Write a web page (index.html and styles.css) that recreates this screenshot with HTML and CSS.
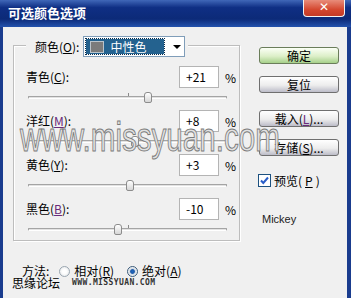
FILE: index.html
```html
<!DOCTYPE html>
<html lang="zh-CN">
    <head>
        <meta charset="UTF-8" />
        <title>可选颜色选项</title>
        <link rel="stylesheet" href="styles.css">
    </head>
    <body>
        <div class="window">
            <div class="titlebar">
                <span class="title">可选颜色选项</span>
                <span class="close">✕</span>
            </div>
            <div class="frame">
                <div class="left">
                    <div class="group">
                        <div class="group-head">
                            <span class="label">颜色(<u>O</u>):</span>
                            <div class="select">
                                <span class="picked"><i class="swatch"></i>中性色</span>
                                <span class="arrow"></span>
                            </div>
                        </div>
                        <div class="channel">
                            <div class="row"><span class="label">青色(<u>C</u>):</span><span class="field">+21</span><span class="pct">%</span></div>
                            <div class="slider"><div class="track"><i class="tick"></i><i class="thumb" style="left: 60.5%"></i></div></div>
                        </div>
                        <div class="channel">
                            <div class="row"><span class="label">洋红(<u class="hot">M</u>):</span><span class="field">+8</span><span class="pct">%</span></div>
                            <div class="slider"><div class="track"><i class="tick"></i><i class="thumb" style="left: 54%"></i></div></div>
                        </div>
                        <div class="channel">
                            <div class="row"><span class="label">黄色(<u>Y</u>):</span><span class="field">+3</span><span class="pct">%</span></div>
                            <div class="slider"><div class="track"><i class="tick"></i><i class="thumb" style="left: 51.5%"></i></div></div>
                        </div>
                        <div class="channel">
                            <div class="row"><span class="label">黑色(<u class="hot">B</u>):</span><span class="field">-10</span><span class="pct">%</span></div>
                            <div class="slider"><div class="track"><i class="tick"></i><i class="thumb" style="left: 45%"></i></div></div>
                        </div>
                    </div>
                    <div class="method">
                        <span class="label">方法:</span>
                        <span class="radio"></span>
                        <span class="label">相对(<u>R</u>)</span>
                        <span class="radio on"></span>
                        <span class="label">绝对(<u>A</u>)</span>
                    </div>
                </div>
                <div class="right">
                    <button class="btn default">确定</button>
                    <button class="btn gap-s">复位</button>
                    <button class="btn gap-l">载入(<u class="hot">L</u>)...</button>
                    <button class="btn gap-s">存储(<u>S</u>)...</button>
                    <label class="check">
                        <svg width="13" height="13" viewBox="0 0 13 13">
                            <rect x="0.5" y="0.5" width="12" height="12" fill="#fff" stroke="#1c5180" />
                            <path d="M3 6.5 L5.3 9 L10 3.5" fill="none" stroke="#2a5ec8" stroke-width="2" />
                        </svg>
                        预览(<u>P</u>)
                    </label>
                    <span class="user">Mickey</span>
                </div>
            </div>
            <div class="mark">www.missyuan.com</div>
            <div class="sig"><span>思缘论坛</span><span class="sig-url">www.missyuan.com</span></div>
        </div>
    </body>
</html>
```

FILE: styles.css
```css
* {
    padding: 0;
    margin: 0;
    box-sizing: border-box;
}
body {
    width: 351px;
    height: 298px;
    overflow: hidden;
    font-family: "Noto Sans CJK SC", "Liberation Sans", sans-serif;
    font-size: 12px;
    color: #000;
}
u {
    text-decoration: underline;
    text-underline-offset: 1px;
}
u.hot {
    color: #6a2a7a;
}
.window {
    position: relative;
    width: 351px;
    height: 298px;
    background: #f0f0f0;
    border-left: 3px solid #1a3c8e;
    border-right: 4px solid #1a3c8e;
}
.titlebar {
    display: flex;
    align-items: flex-start;
    height: 27px;
    margin: 0 -4px 0 -3px;
    background: linear-gradient(#4067b8 0, #0f2f84 28%, #0c2a78 70%, #2352ad 100%);
}
.title {
    color: #fff;
    font-weight: 700;
    font-size: 13px;
    line-height: 26px;
    padding-left: 8px;
}
.close {
    margin: 0 6px 0 auto;
    width: 42px;
    height: 17px;
    border: 1px solid #f2f2f2;
    border-top: none;
    border-radius: 0 0 4px 4px;
    background: linear-gradient(#e88c7a, #d4472f 60%, #c23a26);
    color: #fff;
    font-size: 12px;
    font-weight: 700;
    line-height: 15px;
    text-align: center;
    font-family: "DejaVu Sans", sans-serif;
}
.frame {
    display: flex;
    padding-left: 10px;
}
.left {
    width: 227px;
}
.group {
    margin-top: 18px;
    height: 196px;
    border: 1px solid #bdbdbd;
    box-shadow: inset 1px 1px #fff, 1px 1px #fff;
    padding: 0 0 0 12px;
}
.group-head {
    display: flex;
    align-items: center;
    gap: 4px;
    width: max-content;
    margin: -10px 0 9px 0;
    padding: 0 3px 0 9px;
    background: #f0f0f0;
}
.label {
    white-space: nowrap;
    line-height: 16px;
}
.select {
    display: flex;
    align-items: center;
    width: 102px;
    height: 21px;
    border: 1px solid #7f9db9;
    background: #fff;
    padding: 2px;
}
.picked {
    display: flex;
    align-items: center;
    gap: 6px;
    width: 78px;
    height: 15px;
    padding-left: 4px;
    background: #24628f;
    outline: 1px dotted #0d2d4a;
    color: #fff;
}
.swatch {
    width: 14px;
    height: 12px;
    background: #7b7b7b;
    border: 1px solid #b9c4cc;
}
.arrow {
    margin-left: 9px;
    width: 0;
    height: 0;
    border-left: 4px solid transparent;
    border-right: 4px solid transparent;
    border-top: 4px solid #000;
}
.row {
    display: flex;
    align-items: center;
    height: 22px;
}
.row .label {
    flex: 1;
}
.field {
    width: 40px;
    height: 22px;
    border: 1px solid #b4b4b4;
    background: #fff;
    padding-left: 6px;
    line-height: 20px;
}
.pct {
    width: 20px;
    padding-left: 6px;
}
.slider {
    height: 22px;
    padding: 8px 0 0 2px;
}
.track {
    position: relative;
    width: 199px;
    height: 3px;
    background: #e2e2e2;
    border: 1px solid #a4a4a4;
    border-bottom-color: #fff;
    border-radius: 1px;
}
.tick {
    position: absolute;
    left: 50%;
    top: -4px;
    width: 1px;
    height: 3px;
    background: #8a8a8a;
}
.thumb {
    position: absolute;
    top: -5px;
    width: 8px;
    height: 11px;
    transform: translateX(-50%);
    border: 1px solid #8c8c8c;
    border-radius: 3px 3px 2px 2px;
    background: linear-gradient(#fff, #d6d6d6);
}
.method {
    display: flex;
    align-items: center;
    gap: 4px;
    margin-top: 22px;
    padding-left: 9px;
}
.method .radio + .label {
    margin-right: 9px;
}
.method > .label:first-child {
    margin-right: 6px;
}
.radio {
    width: 11px;
    height: 11px;
    border-radius: 50%;
    border: 1px solid #9aa6b0;
    background: radial-gradient(#fff 30%, #dfe3e6);
}
.radio.on {
    border-color: #3a5a78;
    background: radial-gradient(#1f67c0 0, #1f5aa8 30%, #cfd9e3 45%, #fff 80%);
}
.right {
    display: flex;
    flex-direction: column;
    align-items: flex-start;
    margin-left: 19px;
    padding-top: 20px;
    width: 80px;
}
.btn {
    all: unset;
    box-sizing: border-box;
    width: 80px;
    height: 17px;
    border: 1px solid #6f6f6f;
    border-radius: 3px;
    background: linear-gradient(#ffffff, #ededed 55%, #bcbcc8);
    text-align: center;
    line-height: 15px;
    font-size: 12px;
}
.btn.default {
    border-color: #6a7d5a;
    background: linear-gradient(#fbfff6, #dcefc8 55%, #a6d08a);
}
.gap-s {
    margin-top: 12px;
}
.gap-l {
    margin-top: 17px;
}
.check {
    display: flex;
    align-items: center;
    gap: 3px;
    margin: 18px 0 0 -1px;
    line-height: 13px;
}
.user {
    margin: 26px 0 0 3px;
    font-family: "Liberation Sans", sans-serif;
    font-size: 11px;
    color: #222;
}
.mark {
    position: absolute;
    left: 17px;
    top: 117px;
    font-family: "Liberation Sans", sans-serif;
    font-size: 40px;
    line-height: 40px;
    color: #e2e2e2;
    -webkit-text-stroke: 1px #7a7a7a;
    transform: scaleX(0.74);
    transform-origin: left top;
    white-space: nowrap;
    pointer-events: none;
}
.sig {
    position: absolute;
    left: 9px;
    top: 276px;
    display: flex;
    align-items: center;
    gap: 12px;
    line-height: 14px;
}
.sig-url {
    font-family: "DejaVu Sans Mono", monospace;
    font-size: 8px;
    font-weight: 700;
    text-transform: uppercase;
    letter-spacing: 0.4px;
    color: #333;
}
```
